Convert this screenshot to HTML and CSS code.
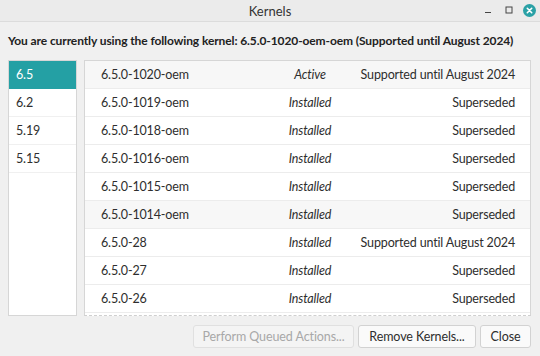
FILE: index.html
```html
<!DOCTYPE html>
<html>
<head>
  <meta charset="utf-8">
  <title>Kernels</title>
  <link rel="stylesheet" href="styles.css">
</head>
<body>
  <div class="window">
    <div class="titlebar">
      <span class="title">Kernels</span>
      <div class="wm-buttons">
        <span class="wm wm-min">
          <svg width="10" height="10" viewBox="0 0 10 10"><path d="M2 7.5h6" stroke="#444" stroke-width="1"/></svg>
        </span>
        <span class="wm wm-max">
          <svg width="10" height="10" viewBox="0 0 10 10"><rect x="2" y="2" width="6" height="6" fill="none" stroke="#444" stroke-width="1"/></svg>
        </span>
        <span class="wm wm-close">
          <svg width="13" height="13" viewBox="0 0 13 13"><circle cx="6.5" cy="6.5" r="6.5" fill="#2aa1a6"/><path d="M4.3 4.3l4.4 4.4M8.7 4.3l-4.4 4.4" stroke="#fff" stroke-width="1.6" stroke-linecap="round"/></svg>
        </span>
      </div>
    </div>

    <div class="content">
      <div class="current">You are currently using the following kernel: 6.5.0-1020-oem-oem (Supported until August 2024)</div>

      <div class="panes">
        <ul class="series">
          <li class="selected">6.5</li>
          <li>6.2</li>
          <li>5.19</li>
          <li>5.15</li>
        </ul>

        <div class="kernels">
          <div class="row shaded"><span class="name">6.5.0-1020-oem</span><span class="status">Active</span><span class="support">Supported until August 2024</span></div>
          <div class="row"><span class="name">6.5.0-1019-oem</span><span class="status">Installed</span><span class="support">Superseded</span></div>
          <div class="row"><span class="name">6.5.0-1018-oem</span><span class="status">Installed</span><span class="support">Superseded</span></div>
          <div class="row"><span class="name">6.5.0-1016-oem</span><span class="status">Installed</span><span class="support">Superseded</span></div>
          <div class="row"><span class="name">6.5.0-1015-oem</span><span class="status">Installed</span><span class="support">Superseded</span></div>
          <div class="row shaded"><span class="name">6.5.0-1014-oem</span><span class="status">Installed</span><span class="support">Superseded</span></div>
          <div class="row"><span class="name">6.5.0-28</span><span class="status">Installed</span><span class="support">Supported until August 2024</span></div>
          <div class="row"><span class="name">6.5.0-27</span><span class="status">Installed</span><span class="support">Superseded</span></div>
          <div class="row"><span class="name">6.5.0-26</span><span class="status">Installed</span><span class="support">Superseded</span></div>
        </div>
      </div>

      <div class="actions">
        <button class="btn btn-queued" disabled>Perform Queued Actions...</button>
        <button class="btn btn-remove">Remove Kernels...</button>
        <button class="btn btn-close">Close</button>
      </div>
    </div>
  </div>
</body>
</html>
```

FILE: styles.css
```css
body {
  margin: 0;
  font-family: 'Lato', 'Noto Sans', sans-serif;
  font-size: 12.5px;
  letter-spacing: -0.15px;
  color: #2e2e2e;
  background-color: #efefef;
}
.window {
  width: 540px;
  height: 356px;
  display: flex;
  flex-direction: column;
  background-color: #f0f0f0;
  overflow: hidden;
}
.titlebar {
  height: 21px;
  flex: none;
  display: flex;
  align-items: center;
  justify-content: center;
  position: relative;
  background-color: #ebebeb;
  border-bottom: 1px solid #dcdcdc;
}
.title {
  font-size: 13px;
  letter-spacing: 0;
  color: #333;
}
.wm-buttons {
  position: absolute;
  right: 4px;
  top: 3px;
  display: flex;
  align-items: center;
  gap: 8px;
}
.wm {
  display: flex;
  align-items: center;
  justify-content: center;
  width: 13px;
  height: 14px;
}
.content {
  flex: 1;
  display: flex;
  flex-direction: column;
  padding: 8px 9px 0 8px;
}
.current {
  font-weight: bold;
  font-size: 12px;
  letter-spacing: -0.1px;
  white-space: nowrap;
  color: #222;
  height: 22px;
  line-height: 22px;
  margin-bottom: 8px;
}
.panes {
  display: flex;
  gap: 7px;
  height: 256px;
}
.series {
  list-style: none;
  margin: 0;
  padding: 0;
  width: 67px;
  background-color: #fff;
  border: 1px solid #d6d6d6;
}
.series li {
  height: 27px;
  line-height: 27px;
  padding-left: 7px;
  border-bottom: 1px solid #f0f0f0;
}
.series li.selected {
  background-color: #24a0a4;
  color: #fff;
  border-bottom-color: #24a0a4;
}
.kernels {
  flex: 1;
  background-color: #fff;
  border: 1px solid #d6d6d6;
  border-bottom: 1px dashed #cfcfcf;
  overflow: hidden;
}
.row {
  display: flex;
  align-items: center;
  height: 27px;
  white-space: nowrap;
  border-bottom: 1px solid #ececec;
  padding: 0 15px 0 16px;
}
.row.shaded {
  background-color: #f7f7f7;
}
.name {
  flex: none;
  width: 154px;
}
.status {
  flex: none;
  width: 110px;
  text-align: center;
  font-style: italic;
}
.support {
  flex: 1;
  min-width: 0;
  display: flex;
  justify-content: flex-end;
}
.actions {
  display: flex;
  justify-content: flex-end;
  gap: 4px;
  margin-top: 9px;
}
.btn {
  font-family: inherit;
  font-size: 12.5px;
  letter-spacing: -0.1px;
  height: 23px;
  padding: 0;
  color: #2e2e2e;
  background-color: #fafafa;
  border: 1px solid #d2d2d2;
  border-radius: 3px;
}
.btn-queued { width: 161px; }
.btn-remove { width: 118px; }
.btn-close { width: 51px; }
.btn:disabled {
  color: #a8a8a8;
  background-color: #f4f4f4;
  border-color: #e0e0e0;
}
```
